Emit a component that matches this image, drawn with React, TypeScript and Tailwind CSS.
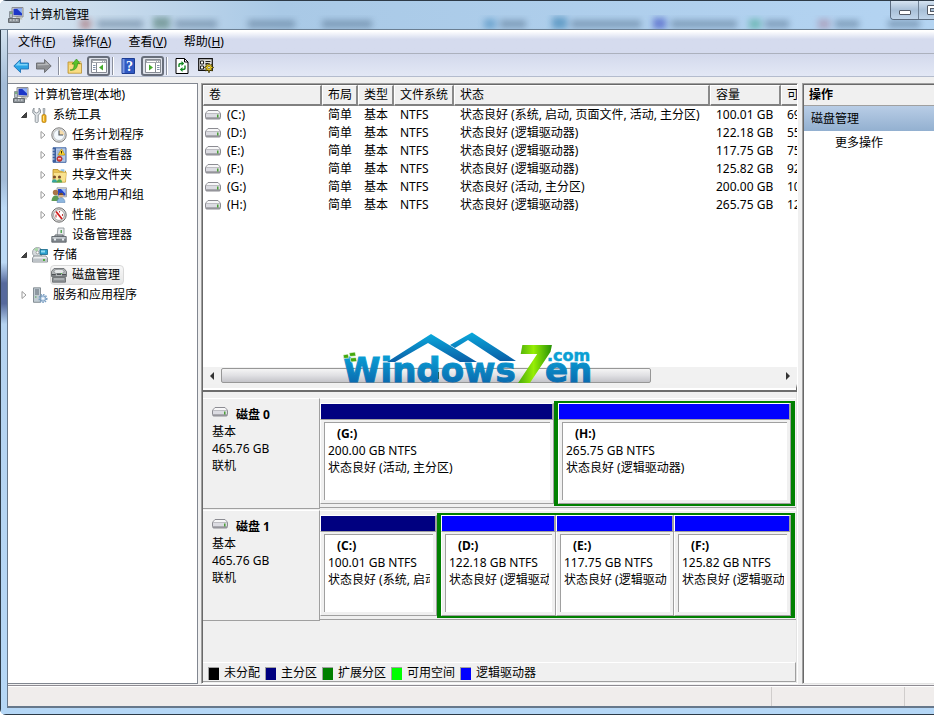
import React from "react";

type IconProps = { className?: string };

function Svg({ children, className = "" }: React.PropsWithChildren<IconProps>) {
  return (
    <svg viewBox="0 0 16 16" className={"size-4 shrink-0 " + className} aria-hidden="true">
      {children}
    </svg>
  );
}

function ComputerIcon() {
  return (
    <Svg>
      <path d="M4 .5h11v9.5l-11-1z" fill="#d8d8d0" stroke="#8c8f94" />
      <path d="M5.5 1.8 14 1.5v7l-8.500-.5z" fill="#1c37c8" />
      <path d="M9 1.800 14 1.500v5z" fill="#8fb2f4" />
      <path d="M8 10h5l1.500 2.500H8z" fill="#c4c4bc" />
      <path d="M1.500 4.500h3v6h-3z" fill="#b9c1c8" stroke="#7b848c" strokeWidth=".8" />
      <path d="M2 6h2" stroke="#3d9a3d" />
      <path d="M.5 11.500h11v4H.5z" fill="#8c9399" stroke="#656b70" />
      <path d="M2 13h1.500M5 13h1.500M8 13h1.500" stroke="#e9edf0" />
    </Svg>
  );
}

function ToolsIcon() {
  return (
    <Svg>
      <path d="M2 1v3.500L4.500 6 7 4.500V1l1.500 2v3L6.200 8v6.500c0 1.500-3 1.500-3 0V8L.8 6V3z" fill="#dfe3e6" stroke="#7e868d" strokeWidth=".8" />
      <path d="M11 1.500h2l-.5 6h-1z" fill="#bcc3c9" stroke="#858b90" strokeWidth=".6" />
      <rect x="10" y="7.500" width="4" height="8" rx="1.500" fill="#f0b323" stroke="#b17a08" strokeWidth=".8" />
      <path d="M11.500 9v5" stroke="#ffe28b" />
    </Svg>
  );
}

function ClockIcon() {
  return (
    <Svg>
      <circle cx="8" cy="8" r="7.200" fill="#e2e2e0" stroke="#7d7d7d" />
      <circle cx="8" cy="8" r="5.500" fill="#f4f9fd" stroke="#a7acb0" strokeWidth=".7" />
      <path d="M8 8V2.800A5.200 5.200 0 0 1 13.200 8z" fill="#f6dcab" />
      <path d="M8 3.500V8h4" fill="none" stroke="#47525c" strokeWidth="1.100" />
    </Svg>
  );
}

function EventIcon() {
  return (
    <Svg>
      <path d="M2 .8h13v14.500H2z" fill="#b4c8e6" stroke="#4468a5" />
      <path d="M2 .8h3v14.500H2z" fill="#3c5f9e" />
      <path d="M.5 3h3M.5 6h3M.5 9h3M.5 12h3" stroke="#dfe7f4" />
      <path d="M6 4h7M6 6h7M6 8h7M6 12h7" stroke="#7f9bc8" strokeWidth=".7" />
      <path d="M10.500 2l3.500 6H7z" fill="#ffd630" stroke="#b78b09" strokeWidth=".6" />
      <path d="M10.500 4v2.500" stroke="#332b00" />
      <circle cx="8.500" cy="11.800" r="2.600" fill="#d93a36" stroke="#9b211d" strokeWidth=".6" />
      <path d="M7 11.800h3" stroke="#fff" />
    </Svg>
  );
}

function SharedIcon() {
  return (
    <Svg>
      <path d="M2 2.500h5l1 1.500h6.500v11H2z" fill="#e9c354" stroke="#b48a22" strokeWidth=".8" />
      <path d="M2.500 5.500h13l-1 9.500h-12z" fill="#f9e290" stroke="#c9a136" strokeWidth=".5" />
      <path d="M9.500 3.500V2h4v3" fill="#8fc4ee" stroke="#fff" strokeWidth=".5" />
      <circle cx="3.500" cy="10" r="1.600" fill="#7d4f2a" />
      <circle cx="8.500" cy="10" r="1.600" fill="#7d4f2a" />
      <path d="M.8 15.500c0-4.500 5.400-4.500 5.400 0z" fill="#35a49b" />
      <path d="M5.800 15.500c0-4.500 5.400-4.500 5.400 0z" fill="#4da953" />
    </Svg>
  );
}

function UsersIcon() {
  return (
    <Svg>
      <path d="M6 .8h9.500v9H6z" fill="#dcdcd4" stroke="#92969a" strokeWidth=".8" />
      <path d="M7 2h7.500v6.500H7z" fill="#2242c9" />
      <path d="M10 2h4.500v5z" fill="#9bbcf5" />
      <circle cx="4.500" cy="5.500" r="2.700" fill="#a97547" />
      <path d="M.5 14c0-7.500 8-7.500 8 0z" fill="#5d9b53" />
      <circle cx="10" cy="8.500" r="2.400" fill="#e0b485" />
      <path d="M7.800 8c0-3 4.500-3 4.500 0z" fill="#76502d" />
      <path d="M6 15.500c0-6.500 8-6.500 8 0z" fill="#8cb6df" stroke="#557fae" strokeWidth=".5" />
    </Svg>
  );
}

function PerformanceIcon() {
  return (
    <Svg>
      <circle cx="8" cy="8" r="7.200" fill="#dededd" stroke="#6f6f6f" />
      <circle cx="8" cy="8" r="5.400" fill="#fff" stroke="#8b8b8b" strokeWidth=".8" />
      <path d="M5 4.500 11 12" stroke="#d11d1d" strokeWidth="1.800" />
      <path d="M5 10.500V7.500M8.500 4v1.500M11.500 7v2" stroke="#b44" strokeWidth="1.100" />
    </Svg>
  );
}

function DeviceIcon() {
  return (
    <Svg>
      <path d="M7 1h6v8H6z" fill="#e9eced" stroke="#878d92" strokeWidth=".8" />
      <path d="M9.500 3h1.500v3H9.500z" fill="#55a757" />
      <path d="M4 9.500V8h8v1.500" fill="none" stroke="#5c6368" />
      <path d="M.8 9.500h14.400v5.700H.8z" fill="#82898f" stroke="#555c62" strokeWidth=".8" />
      <path d="M1.500 10h13v1.800h-13z" fill="#c4cace" />
      <path d="M3 11.500h2v2H3zM11 11.500h2v2h-2z" fill="#e8ecef" />
    </Svg>
  );
}

function StorageIcon() {
  return (
    <Svg>
      <circle cx="5.500" cy="5.500" r="5" fill="#d5dadd" stroke="#8e959a" strokeWidth=".8" />
      <path d="M5.500 5.500 2 2.500A5 5 0 0 1 6 .8z" fill="#a8d8a5" />
      <circle cx="5.500" cy="5.500" r="1.400" fill="#fff" stroke="#777" strokeWidth=".6" />
      <path d="M8 2.500h7.500v5H8z" fill="#2b9fce" stroke="#176787" strokeWidth=".8" />
      <path d="M9 3.500h4v2H9z" fill="#91dcf2" />
      <path d="M2 9h12l1.500 2v4H.5v-4z" fill="#eceeef" stroke="#757c82" strokeWidth=".8" />
      <path d="M.9 11.500h14.200v3.200H.9z" fill="#bdc3c8" />
      <path d="M11 12h2v2h-2z" fill="#4fb03a" />
    </Svg>
  );
}

function DiskMgmtIcon() {
  return (
    <Svg>
      <path d="M3 1.500h10l2.500 3v5H.5v-5z" fill="#b2b5b7" stroke="#6a6d70" strokeWidth=".9" />
      <ellipse cx="8" cy="4.500" rx="5" ry="2.200" fill="#e5e7e8" stroke="#7b7f82" strokeWidth=".7" />
      <path d="M6 6.500h4v1.500H6zM.8 7h4v1.500h-4zM11 7h4v1.500h-4z" fill="#4d5154" />
      <path d="M10 6h1v1h-1z" fill="#5bc649" />
      <path d="M1.500 10.500h13v4.700h-13z" fill="#8f9396" stroke="#606366" strokeWidth=".8" />
      <path d="M3 12h10" stroke="#c9ccce" />
    </Svg>
  );
}

function ServicesIcon() {
  return (
    <Svg>
      <path d="M1.500.8h7v14.500h-7z" fill="#c2ccd3" stroke="#6d7880" strokeWidth=".8" />
      <path d="M3 3h4M3 5h4M3 7h4" stroke="#59656e" />
      <path d="M3 10h1.500" stroke="#4da44b" />
      <circle cx="11" cy="11.500" r="3.800" fill="none" stroke="#7ba0c4" strokeWidth="1.500" strokeDasharray="1.500 1" />
      <circle cx="11" cy="11.500" r="2.700" fill="#c6daed" stroke="#6d94bb" strokeWidth=".9" />
      <circle cx="11" cy="11.500" r="1" fill="#fff" />
    </Svg>
  );
}

function DriveIcon() {
  return (
    <svg viewBox="0 0 16 10" className="h-[10px] w-4 shrink-0" aria-hidden="true">
      <path d="M3 .5h10l2.500 2.800v4.200c0 1-.5 1.500-1.500 1.500H2C1 9 .5 8.500.5 7.500V3.300z" fill="#dcdce2" stroke="#8c8c92" />
      <path d="M3.200 1h9.600l1.800 2H1.400z" fill="#f7f7f8" />
      <path d="M1 3.500h14" stroke="#b5b5ba" strokeWidth=".8" />
      <path d="M1 8h14" stroke="#77777d" />
      <path d="M12 4.500h1.500v3H12z" fill="#4b9f36" />
    </svg>
  );
}

function ArrowIcon({ forward = false }: { forward?: boolean }) {
  return (
    <Svg className={forward ? "rotate-180" : ""}>
      <path d="M.8 8 7.500 1.500V5h8v6h-8v3.500z" fill={forward ? "#8d8f92" : "#2aa4e6"} stroke={forward ? "#696b6e" : "#2372b5"} strokeWidth=".9" />
      <path d={forward ? "M2.500 9 6.500 12.500V10h8V8.500z" : "M2.500 7.500 6.500 3.500V6h8v1.500z"} fill={forward ? "#b6b8ba" : "#7fd3f8"} />
    </Svg>
  );
}

function FolderUpIcon() {
  return (
    <Svg>
      <path d="M1 4h5l1 1.500h7.500v9.700H1z" fill="#f1cd66" stroke="#b89034" strokeWidth=".8" />
      <path d="M9 3.500h5v2H9z" fill="#fae9a7" stroke="#b89034" strokeWidth=".5" />
      <path d="M2 7h12v7.500H2z" fill="#f8dc83" />
      <path d="M3 12c4 0 4-3 4.200-6H5l4.500-5L13 5.500h-2.500C10.500 10 8 13 3 12z" fill="#58c22a" stroke="#2f8615" strokeWidth=".6" />
    </Svg>
  );
}

function PaneIcon({ flip = false }: { flip?: boolean }) {
  return (
    <Svg>
      <path d="M.5 1.500h15v13H.5z" fill="#fff" stroke="#878b93" />
      <path d="M1 2h14v3H1z" fill="#a5a9b0" />
      <path d="M2 3.500h9M12 3.500h1M14 3.500h.7" stroke="#fff" />
      <path d={flip ? "M10.500 5v9" : "M5.500 5v9"} stroke="#878b93" />
      <path d={flip ? "M12 7.500h2.500M12 9.500h2.500M12 11.500h2.500" : "M2 7.500h2.500M2 9.500h2.500M2 11.500h2.500"} stroke="#7e90aa" />
      <path d={flip ? "M4 6.500 8 9.500 4 12.500z" : "M12 6.500 8 9.500l4 3z"} fill="#45ab2d" />
    </Svg>
  );
}

function HelpIcon() {
  return (
    <Svg>
      <path d="M2 .5h12.500v15H2z" fill="#3059c2" stroke="#1d3c92" />
      <path d="M2.500 1h2v14h-2z" fill="#7d9ae3" />
      <text x="9.500" y="13" textAnchor="middle" fill="#fff" className="font-['Liberation_Serif',serif] text-[14px] font-bold">?</text>
    </Svg>
  );
}

function RefreshIcon() {
  return (
    <Svg>
      <path d="M2 .5h8.500l3.500 3.500v11.500H2z" fill="#fff" stroke="#000" />
      <path d="M10.500.5V4H14" fill="none" stroke="#000" />
      <path d="M5 9V7q0-1.500 2-1.500h1M11 7.500V10q0 1.500-2 1.500H7.500" fill="none" stroke="#138a22" strokeWidth="1.400" />
      <path d="M7.500 3v5L10.200 5.500zM8.500 9v5l-2.700-2.500z" fill="#138a22" />
    </Svg>
  );
}

function SettingsIcon() {
  return (
    <Svg>
      <path d="M.7.7h13.600v11.600H.7z" fill="#dedede" stroke="#111" strokeWidth="1.200" />
      <path d="M2.500 3h3v3h-3zM2.500 8h3v3h-3z" fill="#fff" stroke="#222" />
      <path d="M7.500 3.500h5M7.500 5.500h3M7 9h2" stroke="#222" />
      <path d="m11 5 .9 2.200 2.300-1-.8 2.300 2.400 1-2.400 1.100 1 2.400-2.500-1L11 15l-.9-3-2.600 1 1-2.400-2.300-1.100 2.300-1-.8-2.300 2.400 1z" fill="#f7d420" stroke="#332d00" strokeWidth=".7" />
      <circle cx="11" cy="9.600" r="1.200" fill="#fff" stroke="#554b00" strokeWidth=".6" />
    </Svg>
  );
}

type Node = {
  label: string;
  icon: React.ReactNode;
  level: 0 | 1 | 2;
  state?: "open" | "closed";
  selected?: boolean;
};

const tree: Node[] = [
  { label: "计算机管理(本地)", icon: <ComputerIcon />, level: 0 },
  { label: "系统工具", icon: <ToolsIcon />, level: 1, state: "open" },
  { label: "任务计划程序", icon: <ClockIcon />, level: 2, state: "closed" },
  { label: "事件查看器", icon: <EventIcon />, level: 2, state: "closed" },
  { label: "共享文件夹", icon: <SharedIcon />, level: 2, state: "closed" },
  { label: "本地用户和组", icon: <UsersIcon />, level: 2, state: "closed" },
  { label: "性能", icon: <PerformanceIcon />, level: 2, state: "closed" },
  { label: "设备管理器", icon: <DeviceIcon />, level: 2 },
  { label: "存储", icon: <StorageIcon />, level: 1, state: "open" },
  { label: "磁盘管理", icon: <DiskMgmtIcon />, level: 2, selected: true },
  { label: "服务和应用程序", icon: <ServicesIcon />, level: 1, state: "closed" },
];

const indent = { 0: "pl-1", 1: "pl-2", 2: "pl-[27px]" };

function TreeRow({ node }: { node: Node }) {
  return (
    <li role="treeitem" aria-selected={!!node.selected} className={"flex h-5 items-center " + indent[node.level]}>
      {node.level > 0 && (
        <span className="flex w-[15px] justify-center">
          {node.state && (
            <svg viewBox="0 0 8 8" className="size-2" aria-hidden="true">
              {node.state === "open" ? (
                <path d="M6.500 1.500v5h-5z" fill="#444" stroke="#222" strokeWidth=".8" />
              ) : (
                <path d="M2 .5 6 4 2 7.500z" fill="#fff" stroke="#999" />
              )}
            </svg>
          )}
        </span>
      )}
      <button
        className={
          "flex h-5 items-center gap-[5px] rounded-sm border pr-[3px] whitespace-nowrap " +
          (node.selected ? "border-[#d9d9d9] bg-linear-to-b from-[#f8f8f8] to-[#e6e6e6]" : "border-transparent")
        }
      >
        {node.icon}
        <span>{node.label}</span>
      </button>
    </li>
  );
}

const volumes = [
  ["(C:)", "状态良好 (系统, 启动, 页面文件, 活动, 主分区)", "100.01 GB", "69.30 GB"],
  ["(D:)", "状态良好 (逻辑驱动器)", "122.18 GB", "55.12 GB"],
  ["(E:)", "状态良好 (逻辑驱动器)", "117.75 GB", "75.40 GB"],
  ["(F:)", "状态良好 (逻辑驱动器)", "125.82 GB", "92.61 GB"],
  ["(G:)", "状态良好 (活动, 主分区)", "200.00 GB", "101.8 GB"],
  ["(H:)", "状态良好 (逻辑驱动器)", "265.75 GB", "125.5 GB"],
];

const columns = ["卷", "布局", "类型", "文件系统", "状态", "容量", "可用空间"];

function VolumeTable() {
  return (
    <div className="min-h-0 flex-1 overflow-hidden bg-white">
      <table className="w-[680px] table-fixed border-separate border-spacing-0 text-left whitespace-nowrap">
        <colgroup>
          <col className="w-[119px]" />
          <col className="w-[36px]" />
          <col className="w-[36px]" />
          <col className="w-[60px]" />
          <col className="w-[256px]" />
          <col className="w-[71px]" />
          <col />
        </colgroup>
        <thead>
          <tr className="h-[21px] bg-[#f0f0f0]">
            {columns.map((c) => (
              <th key={c} className="h-[21px] border-t border-r-2 border-b-2 border-l border-t-white border-r-[#8a8a8a] border-b-[#808080] border-l-white p-0 pl-[5px] font-normal">
                {c}
              </th>
            ))}
          </tr>
        </thead>
        <tbody>
          {volumes.map(([name, status, size, free]) => (
            <tr key={name} className="h-[18px]">
              <td className="p-0 pl-[2px]">
                <span className="flex items-center gap-[6px]">
                  <DriveIcon />
                  {name}
                </span>
              </td>
              <td className="p-0 pl-[6px]">简单</td>
              <td className="p-0 pl-[6px]">基本</td>
              <td className="p-0 pl-[6px]">NTFS</td>
              <td className="p-0 pl-[6px]">{status}</td>
              <td className="p-0 pl-[6px]">{size}</td>
              <td className="p-0 pl-[6px]">{free}</td>
            </tr>
          ))}
        </tbody>
      </table>
    </div>
  );
}

function Watermark() {
  return (
    <svg viewBox="0 0 256 56" className="absolute top-[246px] left-[138px] h-14 w-64" role="img" aria-label="Windows7en.com">
      <defs>
        <linearGradient id="wmBlue" x1="0" y1="0" x2="0" y2="1">
          <stop offset="0" stopColor="#0aa9dc" />
          <stop offset="1" stopColor="#0a5ea6" />
        </linearGradient>
        <linearGradient id="wmGreen" x1="0" y1="0" x2="1" y2="0">
          <stop offset="0" stopColor="#3fa00c" />
          <stop offset=".5" stopColor="#96ee05" />
          <stop offset="1" stopColor="#2d9605" />
        </linearGradient>
      </defs>
      <path d="M46 31 90 3 136 31H119L87 12 54 31z" fill="url(#wmBlue)" />
      <path d="M109 14 131 1.500 175 30H159L127 9 114 17z" fill="url(#wmBlue)" />
      <text x="2" y="51" fill="url(#wmBlue)" stroke="url(#wmBlue)" strokeWidth="1" className="font-['DejaVu_Sans',sans-serif] text-[34px] font-bold">Windows</text>
      <path d="M2 24l5-1 1 4-5 .5zM8 22l6-1 1 4-6 .5zM9 27l6-.5 1 4-6 .5z" fill="#45a90d" stroke="#fff" strokeWidth=".6" />
      <text x="175" y="51" fill="url(#wmGreen)" stroke="url(#wmGreen)" strokeWidth="2" className="font-['DejaVu_Sans',sans-serif] text-[50px] font-bold italic">7</text>
      <text x="206" y="30" fill="#0aa0d4" stroke="#0aa0d4" strokeWidth=".5" className="font-['DejaVu_Sans',sans-serif] text-[16px] font-bold">.com</text>
      <text x="204" y="51" fill="url(#wmBlue)" stroke="url(#wmBlue)" strokeWidth="1" className="font-['DejaVu_Sans',sans-serif] text-[34px] font-bold">en</text>
    </svg>
  );
}

function HorizontalScroll() {
  return (
    <div className="flex h-[17px] items-center bg-[#f1f1f1]">
      <button aria-label="向左滚动" className="flex h-[17px] w-[18px] items-center justify-center">
        <svg viewBox="0 0 4 8" className="h-2 w-1"><path d="M4 0v8L0 4z" fill="#333" /></svg>
      </button>
      <div className="flex-1">
        <div className="flex h-[15px] w-[77%] items-center justify-center gap-[2px] rounded-[2px] border border-[#979797] bg-linear-to-b from-[#f5f5f5] via-[#e0e0e3] to-[#c4c4c9]">
          <span className="h-[7px] w-px bg-[#555]" />
          <span className="h-[7px] w-px bg-[#555]" />
          <span className="h-[7px] w-px bg-[#555]" />
        </div>
      </div>
      <button aria-label="向右滚动" className="flex h-[17px] w-[18px] items-center justify-center">
        <svg viewBox="0 0 4 8" className="h-2 w-1"><path d="M0 0v8l4-4z" fill="#333" /></svg>
      </button>
    </div>
  );
}

type PartitionProps = { name: string; size: string; status: string; primary?: boolean; grow: string };

function Partition({ name, size, status, primary = false, grow }: PartitionProps) {
  return (
    <section className={"flex min-w-0 basis-0 flex-col " + grow + (primary ? " my-[2px]" : "")}>
      <div className={"h-[17px] border-t border-r-2 border-b border-l border-t-white border-r-[#a0a0a0] border-b-[#a0a0a0] border-l-white " + (primary ? "bg-[#000080]" : "bg-[#0000ff]")} />
      <div className="flex flex-1 border-r border-b border-l border-r-[#a0a0a0] border-b-[#a0a0a0] border-l-white bg-[#f0f0f0] p-[3px] pt-[2px]">
        <div className="min-w-0 flex-1 border-t border-l border-[#a0a0a0] bg-white px-[3px] pt-[2px] leading-[17px] whitespace-nowrap">
          <div className="overflow-hidden">
            <h3 className="pl-[9px] font-bold">{name}</h3>
            <p>{size} NTFS</p>
            <p>{status}</p>
          </div>
        </div>
      </div>
    </section>
  );
}

function DiskRow({ name, children }: React.PropsWithChildren<{ name: string }>) {
  return (
    <div className="mb-px flex h-[111px]">
      <div className="w-[117px] shrink-0 border-t border-r border-b border-t-white border-r-[#a0a0a0] border-b-[#a0a0a0] pt-[7px] pl-[9px] leading-[17px]">
        <div className="flex gap-2">
          <span className="pt-px"><DriveIcon /></span>
          <h2 className="font-bold">{name}</h2>
        </div>
        <p>基本</p>
        <p>465.76 GB</p>
        <p>联机</p>
      </div>
      <div className="mb-px flex min-w-0 flex-1 border-t border-b border-t-white border-b-[#a0a0a0] pt-[2px] pr-px pb-px">
        {children}
      </div>
    </div>
  );
}

function ExtendedGroup({ children, grow }: React.PropsWithChildren<{ grow: string }>) {
  return <div className={"flex min-w-0 basis-0 border-x-4 border-y-2 border-[#008000] " + grow}>{children}</div>;
}

const legend = [
  ["未分配", "bg-black"],
  ["主分区", "bg-[#000080]"],
  ["扩展分区", "bg-[#008000]"],
  ["可用空间", "bg-[#00ff00]"],
  ["逻辑驱动器", "bg-[#0000ff]"],
];

function TitleBar() {
  return (
    <header className="relative flex h-[30px] items-start overflow-hidden border-t border-b border-t-[#2d3a47] border-b-[#6b7f93] bg-linear-to-r from-[#dbe6f0] via-[#a9c9e6] via-30% to-[#b4d4f2]">
      <svg className="absolute inset-0 h-full w-full" aria-hidden="true">
        <defs>
          <filter id="glass"><feGaussianBlur stdDeviation="3" /></filter>
        </defs>
        <g filter="url(#glass)" fill="#53708c" opacity=".5">
          <rect x="80" y="18" width="11" height="10" fill="#9f5252" />
          <rect x="97" y="19" width="46" height="8" />
          <rect x="153" y="16" width="17" height="12" fill="#3d6b58" />
          <rect x="175" y="19" width="42" height="8" />
          <rect x="248" y="19" width="47" height="8" />
          <rect x="322" y="19" width="50" height="8" />
          <rect x="484" y="18" width="12" height="10" fill="#3783b8" />
          <rect x="500" y="19" width="26" height="8" />
          <rect x="552" y="16" width="15" height="12" fill="#1b6fa5" />
          <rect x="571" y="19" width="70" height="8" />
          <rect x="653" y="17" width="13" height="11" fill="#2230b8" />
          <rect x="671" y="19" width="66" height="8" />
          <rect x="749" y="18" width="12" height="10" fill="#38a488" />
          <rect x="765" y="19" width="24" height="8" />
          <rect x="818" y="18" width="12" height="10" fill="#a8809b" />
          <rect x="835" y="19" width="24" height="8" />
          <rect x="888" y="19" width="32" height="8" />
        </g>
      </svg>
      <div className="relative flex items-center gap-[5px] pt-[5px] pl-2">
        <ComputerIcon />
        <h1>计算机管理</h1>
      </div>
      <div className="relative ml-auto flex h-[19px] w-11 overflow-hidden rounded-bl border-b border-l border-[#5b6c80]">
        <button aria-label="最小化" className="flex w-7 shrink-0 items-center justify-center border-r border-[#6f8195] bg-linear-to-b from-[#d5e3f1] via-[#a8bfd7] to-[#c0d5ea]">
          <span className="mt-1 h-[5px] w-3 rounded-[1px] border border-[#535a66] bg-white" />
        </button>
        <button aria-label="最大化" className="flex w-7 shrink-0 items-center justify-center bg-linear-to-b from-[#d5e3f1] via-[#a8bfd7] to-[#c0d5ea]">
          <span className="flex h-[10px] w-[13px] items-center justify-center rounded-[1px] border border-[#535a66] bg-white">
            <span className="h-1 w-[6px] border border-[#535a66] bg-[#a8bfd7]" />
          </span>
        </button>
      </div>
    </header>
  );
}

const menus = [["文件", "F"], ["操作", "A"], ["查看", "V"], ["帮助", "H"]];

function Separator() {
  return <span className="h-[18px] w-[2px] border-r border-l border-r-white border-l-[#8a8f9d]" />;
}

function Toolbar() {
  const framed = "flex h-5 w-[23px] items-center justify-center rounded-[3px] border-2 border-[#686e7b] bg-[#dfe2ea]";
  return (
    <div role="toolbar" className="flex h-[23px] items-center border-b border-[#b4bccd] bg-linear-to-b from-[#d3d9ec] to-[#e3e8f5] pt-px pl-[5px]">
      <button aria-label="后退"><ArrowIcon /></button>
      <button aria-label="前进" className="ml-[7px]"><ArrowIcon forward /></button>
      <span className="ml-[6px] flex"><Separator /></span>
      <button aria-label="上移一级" className="ml-[7px]"><FolderUpIcon /></button>
      <button aria-label="显示/隐藏控制台树" className={"ml-1 " + framed}><PaneIcon /></button>
      <span className="ml-[2px] flex"><Separator /></span>
      <button aria-label="帮助" className="ml-[6px]"><HelpIcon /></button>
      <button aria-label="显示/隐藏操作窗格" className={"ml-[5px] " + framed}><PaneIcon flip /></button>
      <span className="ml-[2px] flex"><Separator /></span>
      <button aria-label="刷新" className="ml-[6px]"><RefreshIcon /></button>
      <button aria-label="设置" className="ml-2"><SettingsIcon /></button>
    </div>
  );
}

export default function App() {
  return (
    <div className="flex min-h-screen w-full flex-col overflow-hidden rounded-l-md bg-[#b5d5f3] font-['Noto_Sans','Noto_Sans_CJK_SC',sans-serif] text-[12px] leading-[18px] text-black">
      <TitleBar />
      <div className="flex flex-1 border-b border-l border-[#2d3a47] bg-[linear-gradient(#d4e2ef,#a3bcd8_8%,#a3bcd8_22%,#bcd9f5_26%,#bcd9f5_34%,#56699c_37%,#56699c_40%,#b5d3f0_43%,#b5d7f6)] pb-[6px] pl-[6px]">
        <div className="flex min-w-0 flex-1 flex-col border-b-2 border-l border-[#67788b] bg-[#f0f0f0]">
          <nav className="flex h-[24px] items-center gap-px border-b border-[#acb1bd] bg-linear-to-b from-white from-5% via-[#d5dbee] via-40% to-[#d5dbee] pl-[2px]">
            {menus.map(([label, key]) => (
              <button key={key} className="px-2">
                {label}(<span className="underline">{key}</span>)
              </button>
            ))}
          </nav>
          <Toolbar />

          <main className="mt-[6px] flex min-h-0 flex-1">
            <aside className="w-[190px] shrink-0 border-t border-r border-b border-[#828790] bg-white">
              <ul role="tree" className="pt-px">
                {tree.map((n) => <TreeRow key={n.label} node={n} />)}
              </ul>
            </aside>

            <div className="mx-[4px] ml-[3px] flex min-w-0 flex-1 flex-col border-t border-r border-b border-l border-t-[#a0a0a0] border-r-white border-b-white border-l-[#a0a0a0]">
              <div className="flex min-h-0 flex-1 flex-col border-t border-l border-[#696969]">
                <div className="relative flex h-[307px] shrink-0 flex-col border-b-2 border-[#6d6d6d]">
                  <VolumeTable />
                  <HorizontalScroll />
                  <div className="h-[6px] border-t-4 border-r border-t-[#f0f0f0] border-r-[#696969] bg-white" />
                  <Watermark />
                </div>
                <div className="flex flex-1 flex-col border-r border-[#e3e3e3] pt-[6px]">
                  <DiskRow name="磁盘 0">
                    <Partition name="(G:)" size="200.00 GB" status="状态良好 (活动, 主分区)" primary grow="grow-[234]" />
                    <ExtendedGroup grow="grow-[233]">
                      <Partition name="(H:)" size="265.75 GB" status="状态良好 (逻辑驱动器)" grow="grow" />
                    </ExtendedGroup>
                  </DiskRow>
                  <DiskRow name="磁盘 1">
                    <Partition name="(C:)" size="100.01 GB" status="状态良好 (系统, 启动, 页面文件, 活动, 主分区)" primary grow="grow-[117]" />
                    <ExtendedGroup grow="grow-[350]">
                      <Partition name="(D:)" size="122.18 GB" status="状态良好 (逻辑驱动器)" grow="grow-[115]" />
                      <Partition name="(E:)" size="117.75 GB" status="状态良好 (逻辑驱动器)" grow="grow-[118]" />
                      <Partition name="(F:)" size="125.82 GB" status="状态良好 (逻辑驱动器)" grow="grow-[117]" />
                    </ExtendedGroup>
                  </DiskRow>
                  <ul className="mt-auto mb-px flex h-5 items-center gap-[5px] border-t border-r border-b border-t-white border-r-[#a0a0a0] border-b-[#a0a0a0] pt-[2px] pl-[5px]">
                    {legend.map(([label, color]) => (
                      <li key={label} className="flex items-center gap-[5px]">
                        <span className={"h-[13px] w-[11px] border-t border-l border-[#a0a0a0] " + color} />
                        {label}
                      </li>
                    ))}
                  </ul>
                </div>
              </div>
            </div>

            <aside className="w-[132px] shrink-0 border-t border-b border-l border-t-[#a0a0a0] border-b-[#e3e3e3] border-l-[#a0a0a0]">
              <div className="h-full border-t border-l border-[#696969] bg-white">
                <h2 className="flex h-[21px] items-center border-b border-[#a0a0a0] bg-[#f0f0f0] pl-[5px] font-bold">操作</h2>
                <button className="flex h-[25px] w-full items-center bg-linear-to-b from-[#b8cde6] to-[#93b0d0] pl-[7px]">磁盘管理</button>
                <button className="flex h-6 w-full items-center pl-[31px]">更多操作</button>
              </div>
            </aside>
          </main>

          <footer className="mt-px flex h-[21px] border-t border-[#8e8b92] bg-white pt-px">
            <div className="flex-1 bg-[#f0edec]" />
            <div className="w-[133px] border-l border-[#d0cdcc] bg-[#f0edec]" />
            <div className="w-[30px] border-l border-[#d0cdcc] bg-[#f0edec]" />
          </footer>
        </div>
      </div>
    </div>
  );
}
